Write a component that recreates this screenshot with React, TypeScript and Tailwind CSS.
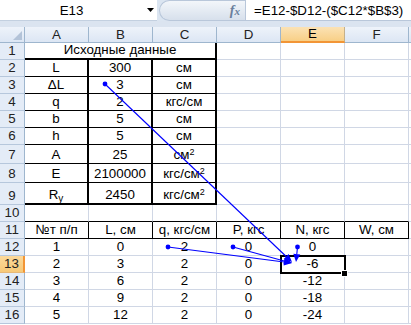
import React from 'react';

type Side = 'g' | 'k' | 'K';
const RC: Record<Side, string> = {
  g: 'border-r border-r-[#d0d7e5]',
  k: 'border-r border-r-black',
  K: 'border-r-2 border-r-black',
};
const BC: Record<Side, string> = {
  g: 'border-b border-b-[#d0d7e5]',
  k: 'border-b border-b-black',
  K: 'border-b-2 border-b-black',
};

interface Cell {
  v?: React.ReactNode;
  r?: Side;
  b?: Side;
  span3?: boolean;
}

const sup = (t: string) => (
  <>
    {t}
    <sup className="text-[9px]">2</sup>
  </>
);

const g = (v?: React.ReactNode): Cell => ({ v, r: 'g', b: 'g' });
const t = (v: React.ReactNode, b: Side = 'k'): Cell => ({ v, r: 'K', b });

const rows: { n: number; sel?: boolean; cells: Cell[] }[] = [
  { n: 1, cells: [{ v: 'Исходные данные', r: 'K', b: 'K', span3: true }, g(), g(), g()] },
  { n: 2, cells: [t('L'), t('300'), t('см'), g(), g(), g()] },
  { n: 3, cells: [t('ΔL'), t('3'), t('см'), g(), g(), g()] },
  { n: 4, cells: [t('q'), t('2'), t('кгс/см'), g(), g(), g()] },
  { n: 5, cells: [t('b'), t('5'), t('см'), g(), g(), g()] },
  { n: 6, cells: [t('h'), t('5'), t('см'), g(), g(), g()] },
  { n: 7, cells: [t('A'), t('25'), t(sup('см')), g(), g(), g()] },
  { n: 8, cells: [t('E'), t('2100000'), t(sup('кгс/см')), g(), g(), g()] },
  {
    n: 9,
    cells: [
      t(
        <>
          R<sub className="text-[10px]">y</sub>
        </>,
        'K'
      ),
      t('2450', 'K'),
      t(sup('кгс/см'), 'K'),
      g(),
      g(),
      g(),
    ],
  },
  {
    n: 10,
    cells: [
      { r: 'g', b: 'k' },
      { r: 'g', b: 'k' },
      { r: 'g', b: 'k' },
      { r: 'g', b: 'k' },
      { r: 'g', b: 'k' },
      { r: 'g', b: 'k' },
    ],
  },
  {
    n: 11,
    cells: ['№т п/п', 'L, см', 'q, кгс/см', 'P, кгс', 'N, кгс', 'W, см'].map((v) => ({ v, r: 'k' as Side, b: 'k' as Side })),
  },
  { n: 12, cells: [g('1'), g('0'), g('2'), g('0'), g('0'), g()] },
  { n: 13, sel: true, cells: [g('2'), g('3'), g('2'), g('0'), g('-6'), g()] },
  { n: 14, cells: [g('3'), g('6'), g('2'), g('0'), g('-12'), g()] },
  { n: 15, cells: [g('4'), g('9'), g('2'), g('0'), g('-18'), g()] },
  { n: 16, cells: [g('5'), g('12'), g('2'), g('0'), g('-24'), g()] },
];

function Arrow({ x1, y1, x2, y2 }: { x1: number; y1: number; x2: number; y2: number }) {
  const dx = x2 - x1;
  const dy = y2 - y1;
  const len = Math.hypot(dx, dy);
  const ux = dx / len;
  const uy = dy / len;
  const L = 8;
  const W = 3.5;
  const bx = x2 - ux * L;
  const by = y2 - uy * L;
  const pts = `${x2},${y2} ${bx - uy * W},${by + ux * W} ${bx + uy * W},${by - ux * W}`;
  return (
    <g>
      <line x1={x1} y1={y1} x2={bx} y2={by} stroke="#0000ff" strokeWidth={1.1} />
      <polygon points={pts} fill="#0000ff" />
      <circle cx={x1} cy={y1} r={2.4} fill="#0000ff" />
    </g>
  );
}

export default function App() {
  return (
    <div className="relative w-[411px] h-[325px] overflow-hidden bg-white font-['Liberation_Sans',Arial,sans-serif] text-[13.33px] text-black">
      {/* formula bar */}
      <div className="flex h-[21px] bg-[#dbe5f1]">
        <div className="flex w-[157px] bg-white border-b border-[#c3d0e0]">
          <div className="flex-1 flex items-center justify-center leading-none pt-[1px]">E13</div>
          <div className="w-[14px] flex items-center justify-center">
            <svg width="7" height="4" viewBox="0 0 7 4">
              <polygon points="0,0 7,0 3.5,4" fill="#000" />
            </svg>
          </div>
        </div>
        <div className="w-[86px] ml-[2px] flex items-center justify-end pr-[5px] rounded-l-[11px] border-l border-y border-[#b9c7da] bg-linear-to-b from-[#f3f6fa] to-[#d7e0ec]">
          <span className="font-['Liberation_Serif',serif] italic font-bold text-[14px] text-[#6a7f9c] leading-none">
            f<span className="text-[11px]">x</span>
          </span>
        </div>
        <div className="flex-1 bg-white border-l border-b border-[#b9c7da] flex items-center pl-[8px] leading-none pt-[1px] whitespace-nowrap">
          =E12-$D12-($C12*$B$3)
        </div>
      </div>
      <div className="h-[6px] bg-[#dbe4f0]" />

      {/* grid */}
      <div className="grid grid-cols-[25px_64px_64px_64px_64px_64px_64px_2px] grid-rows-[16px_17px_17px_17px_17px_17px_17px_19px_19px_22px_17px_17px_17px_17px_17px_17px_17px]">
        {/* header row */}
        <div className="relative bg-linear-to-b from-[#eef3fa] to-[#dce6f4] border-r border-b border-[#9eb6ce]">
          <svg className="absolute right-[2px] bottom-[2px]" width="9" height="9" viewBox="0 0 9 9">
            <polygon points="9,0 9,9 0,9" fill="#b3c3d8" />
          </svg>
        </div>
        {['A', 'B', 'C', 'D', 'E', 'F'].map((c) =>
          c === 'E' ? (
            <div
              key={c}
              className="flex items-end justify-center leading-[15px] bg-linear-to-b from-[#fbe2b4] to-[#f8cf86] border-r border-r-[#c5b08a] border-b-2 border-b-[#f29536]"
            >
              {c}
            </div>
          ) : (
            <div
              key={c}
              className="flex items-end justify-center leading-[15px] bg-linear-to-b from-[#eef3fa] to-[#dce6f4] border-r border-b border-[#9eb6ce] text-[#222]"
            >
              {c}
            </div>
          )
        )}
        <div className="bg-linear-to-b from-[#eef3fa] to-[#dce6f4] border-b border-[#9eb6ce]" />

        {rows.map((row) => (
          <React.Fragment key={row.n}>
            {row.sel ? (
              <div className="flex items-end justify-center leading-[15px] pb-[1px] bg-linear-to-b from-[#fbd99b] to-[#f7c978] border-r-2 border-r-[#f29536] border-b border-b-[#e7b877] text-[#222]">
                {row.n}
              </div>
            ) : (
              <div className="flex items-end justify-center leading-[15px] pb-[1px] bg-[#e4ecf7] border-r border-r-[#9eb6ce] border-b border-b-[#b6c7dc] text-[#222]">
                {row.n}
              </div>
            )}
            {row.cells.map((c, i) => (
              <div
                key={i}
                className={`${c.span3 ? 'col-span-3' : ''} ${RC[c.r ?? 'g']} ${BC[c.b ?? 'g']} flex items-end justify-center whitespace-nowrap leading-[15px] pb-[1px]`}
              >
                <span>{c.v}</span>
              </div>
            ))}
            <div className="border-b border-b-[#d0d7e5]" />
          </React.Fragment>
        ))}
      </div>

      {/* selection */}
      <div className="absolute left-[280px] top-[255px] w-[66px] h-[19px] border-2 border-black" />
      <div className="absolute left-[341px] top-[270px] w-[7px] h-[7px] bg-black border border-white" />

      {/* trace precedents */}
      <svg className="absolute left-0 top-0 pointer-events-none" width="411" height="325" viewBox="0 0 411 325">
        <Arrow x1={105} y1={84} x2={292} y2={262} />
        <Arrow x1={168} y1={247} x2={292} y2={263} />
        <Arrow x1={233} y1={247} x2={292} y2={263} />
        <Arrow x1={297.5} y1={247} x2={296} y2={262} />
      </svg>
    </div>
  );
}
